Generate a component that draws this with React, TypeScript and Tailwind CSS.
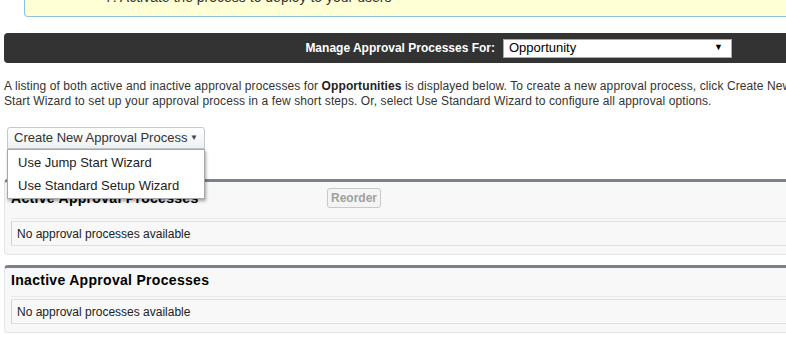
const font = { fontFamily: '"Liberation Sans", Arial, sans-serif' };

function ProcessPanel({ title, withReorder }: { title: string; withReorder?: boolean }) {
  return (
    <div className="mx-[4px] rounded-[4px] border border-t-[3px] border-[#e3e4e6] border-t-[#7a828f] bg-[#f8f8f8] pb-[8px]">
      <div className={`flex items-center pl-[6px] ${withReorder ? 'h-[32px]' : 'h-[24px]'}`}>
        <h2 className="w-[316px] text-[14px] font-bold leading-[16px] tracking-[0.3px] text-[#000]">{title}</h2>
        {withReorder ? (
          <button
            disabled
            className="h-[20px] rounded-[3px] border border-[#c9c9c9] bg-[#f4f4f4] px-[3px] text-[12px] font-bold leading-[16px] text-[#a0a0a0]"
          >
            Reorder
          </button>
        ) : null}
      </div>
      <div className="mx-[6px] mt-[4px] border-t border-[#e9e9e9] pt-[2px]">
        <div className="flex h-[25px] items-center border border-[#e0e1e2] border-l-[#d2d2d2] bg-[#f8f8f8] pl-[5px] text-[12px] text-[#222]">
          No approval processes available
        </div>
      </div>
    </div>
  );
}

export default function App() {
  return (
    <div className="h-[349px] w-full overflow-hidden bg-white" style={font}>
      <div className="w-[900px]">
        <div className="ml-[24px] h-[17px] overflow-hidden rounded-b-[4px] border border-t-0 border-[#8fbfe6] bg-[#ffffd6]">
          <div className="-mt-[11px] pl-[80px] text-[14px] leading-[16px] text-[#333]">
            7. Activate the process to deploy to your users
          </div>
        </div>

        <div className="mt-[16px] ml-[4px] flex h-[30px] items-center rounded-l-[4px] bg-[#333333] pl-[4px]">
          <div className="flex w-[724px] items-center justify-end">
            <span className="mr-[8px] text-[12px] font-bold text-white">Manage Approval Processes For:</span>
            <div className="flex h-[19px] w-[229px] items-center justify-between border border-[#a9a9a9] bg-white pl-[5px] pr-[8px] text-[13px] text-black">
              <span>Opportunity</span>
              <span className="text-[9px]">▼</span>
            </div>
          </div>
        </div>

        <p className="mt-[16px] whitespace-nowrap px-[4px] text-[12px] leading-[15px] tracking-[0.1px] text-[#333]">
          A listing of both active and inactive approval processes for <b className="text-[#222]">Opportunities</b> is
          displayed below. To create a new approval process, click Create New Approval Process and select Use Jump
          <br />
          Start Wizard to set up your approval process in a few short steps. Or, select Use Standard Wizard to configure
          all approval options.
        </p>

        <div className="relative z-10 mt-[18px] ml-[7px] w-[198px]">
          <button className="flex h-[22px] w-[198px] items-center justify-between rounded-t-[3px] border border-[#c3c8cc] bg-gradient-to-b from-white to-[#eef1f3] pl-[6px] pr-[6px] text-[13px] text-[#333]">
            <span>Create New Approval Process</span>
            <span className="text-[8px] text-[#444]">▼</span>
          </button>
          <div className="absolute left-0 top-[22px] w-[198px] border border-[#a8a8a8] bg-white py-[1px] shadow-[1px_2px_3px_rgba(0,0,0,0.35)]">
            <div className="flex h-[23px] items-center pl-[10px] text-[13px] text-[#222]">Use Jump Start Wizard</div>
            <div className="flex h-[23px] items-center pl-[10px] text-[13px] text-[#222]">Use Standard Setup Wizard</div>
          </div>
        </div>

        <div className="mt-[30px]">
          <ProcessPanel title="Active Approval Processes" withReorder />
        </div>
        <div className="mt-[10px]">
          <ProcessPanel title="Inactive Approval Processes" />
        </div>
      </div>
    </div>
  );
}
